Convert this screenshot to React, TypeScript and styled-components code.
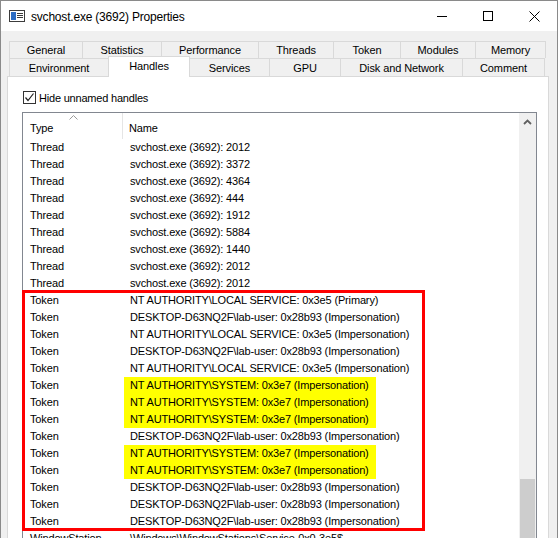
import React from "react";
import styled, { createGlobalStyle } from "styled-components";

const Global = createGlobalStyle`
  html, body { margin: 0; padding: 0; background: #ffffff; }
  body { font-family: "Liberation Sans", Arial, sans-serif; }
  * { box-sizing: border-box; }
`;

const Window = styled.div`
  width: 558px;
  height: 538px;
  overflow: hidden;
  border: 1px solid #8a8a8a;
  border-bottom: none;
  background: #f0f0f0;
  display: flex;
  flex-direction: column;
`;

const TitleBar = styled.div`
  height: 30px;
  flex: none;
  background: #ffffff;
  display: flex;
  align-items: center;
`;

const AppIcon = styled.svg`
  margin-left: 8px;
  margin-right: 6px;
  flex: none;
`;

const Title = styled.div`
  font-family: "Liberation Sans", Arial, sans-serif;
  font-size: 12px;
  letter-spacing: -0.2px;
  color: #000;
  flex: 1;
  padding-top: 1px;
`;

const CaptionButton = styled.div`
  width: 46px;
  height: 30px;
  display: flex;
  align-items: center;
  justify-content: center;
  flex: none;
`;

const Body = styled.div`
  flex: 1;
  padding: 10px 8px 0 6px;
  display: flex;
  flex-direction: column;
  min-height: 0;
`;

const TabStrip = styled.div`
  margin-left: 2px;
  width: 537px;
  display: flex;
  flex-direction: column;
  position: relative;
  z-index: 1;
`;

const TabRow = styled.div<{ $h: number }>`
  display: flex;
  height: ${(p) => p.$h}px;
  align-items: flex-end;
`;

const Tab = styled.div<{ $w: number; $last?: boolean; $active?: boolean }>`
  width: ${(p) => p.$w}px;
  flex: none;
  height: ${(p) => (p.$active ? "calc(100% + 3px)" : "100%")};
  margin-bottom: ${(p) => (p.$active ? "-1px" : "0")};
  border-top: 1px solid #d9d9d9;
  border-left: 1px solid #d9d9d9;
  border-right: ${(p) => (p.$last || p.$active ? "1px solid #d9d9d9" : "none")};
  margin-right: ${(p) => (p.$active ? "-1px" : "0")};
  background: ${(p) => (p.$active ? "#ffffff" : "#f0f0f0")};
  font-size: 11px;
  letter-spacing: -0.1px;
  color: #000;
  display: flex;
  align-items: center;
  justify-content: center;
  padding-bottom: ${(p) => (p.$active ? "3px" : "0")};
  position: relative;
  z-index: ${(p) => (p.$active ? 2 : 1)};
`;

const TabPage = styled.div`
  flex: 1;
  width: 542px;
  background: #ffffff;
  border: 1px solid #d9d9d9;
  border-bottom: none;
  padding: 14px 11px 0 14px;
  display: flex;
  flex-direction: column;
  min-height: 0;
`;

const CheckRow = styled.label`
  display: flex;
  align-items: center;
  gap: 3px;
  padding-left: 1px;
  height: 13px;
  font-size: 11px;
  letter-spacing: -0.2px;
  color: #000;
  line-height: 12px;
`;

const CheckBox = styled.span`
  width: 13px;
  height: 13px;
  border: 1px solid #333333;
  background: #ffffff;
  display: flex;
  align-items: center;
  justify-content: center;
  flex: none;
`;

const ListView = styled.div`
  margin-top: 8px;
  width: 515px;
  flex: 1;
  border: 1px solid #828790;
  border-bottom: none;
  display: flex;
  position: relative;
  min-height: 0;
`;

const ListMain = styled.div`
  flex: 1;
  display: flex;
  flex-direction: column;
  overflow: hidden;
`;

const Header = styled.div`
  height: 26px;
  flex: none;
  display: flex;
  position: relative;
  font-size: 11px;
  letter-spacing: -0.15px;
  color: #000;
`;

const HeaderCell = styled.div<{ $w?: number; $pad: number }>`
  width: ${(p) => (p.$w ? `${p.$w}px` : "auto")};
  flex: ${(p) => (p.$w ? "none" : "1")};
  padding-left: ${(p) => p.$pad}px;
  padding-top: 4px;
  display: flex;
  align-items: center;
  border-right: ${(p) => (p.$w ? "1px solid #e5e5e5" : "none")};
  position: relative;
`;

const SortArrow = styled.svg`
  position: absolute;
  left: 46px;
  top: 2px;
`;

const Row = styled.div`
  height: 17px;
  flex: none;
  display: flex;
  font-size: 11px;
  letter-spacing: -0.15px;
  color: #000;
  line-height: 17px;
  white-space: nowrap;
`;

const TypeCell = styled.div`
  width: 101px;
  flex: none;
  padding-left: 7px;
`;

const NameCell = styled.div`
  flex: 1;
`;

const NameText = styled.span<{ $hl?: boolean }>`
  display: inline-block;
  height: 17px;
  padding: 0 7px 0 6px;
  background: ${(p) => (p.$hl ? "#ffff00" : "transparent")};
`;

const ScrollBar = styled.div`
  width: 17px;
  flex: none;
  background: #f0f0f0;
  display: flex;
  flex-direction: column;
  align-items: center;
`;

const ScrollButton = styled.div`
  height: 17px;
  width: 17px;
  display: flex;
  align-items: center;
  justify-content: center;
  flex: none;
`;

const ScrollTrack = styled.div`
  flex: 1;
  width: 15px;
  padding-top: 349px;
`;

const Thumb = styled.div`
  height: 100px;
  background: #cdcdcd;
`;

const Annotation = styled.div`
  position: absolute;
  left: -1px;
  top: 177px;
  width: 403px;
  height: 241px;
  border: 3px solid #ff0000;
  pointer-events: none;
`;

type Item = { type: string; name: string; hl?: boolean };

const SYS = "NT AUTHORITY\\SYSTEM: 0x3e7 (Impersonation)";
const LAB = "DESKTOP-D63NQ2F\\lab-user: 0x28b93 (Impersonation)";
const LS = "NT AUTHORITY\\LOCAL SERVICE: 0x3e5 (Impersonation)";

const items: Item[] = [
  ...["2012", "3372", "4364", "444", "1912", "5884", "1440", "2012", "2012"].map((n) => ({
    type: "Thread",
    name: `svchost.exe (3692): ${n}`,
  })),
  { type: "Token", name: "NT AUTHORITY\\LOCAL SERVICE: 0x3e5 (Primary)" },
  { type: "Token", name: LAB },
  { type: "Token", name: LS },
  { type: "Token", name: LAB },
  { type: "Token", name: LS },
  { type: "Token", name: SYS, hl: true },
  { type: "Token", name: SYS, hl: true },
  { type: "Token", name: SYS, hl: true },
  { type: "Token", name: LAB },
  { type: "Token", name: SYS, hl: true },
  { type: "Token", name: SYS, hl: true },
  { type: "Token", name: LAB },
  { type: "Token", name: LAB },
  { type: "Token", name: LAB },
  { type: "WindowStation", name: "\\Windows\\WindowStations\\Service-0x0-3e5$" },
];

const row1: [string, number][] = [
  ["General", 73],
  ["Statistics", 79],
  ["Performance", 97],
  ["Threads", 75],
  ["Token", 67],
  ["Modules", 75],
  ["Memory", 71],
];

const row2: [string, number][] = [
  ["Environment", 99],
  ["Handles", 82],
  ["Services", 80],
  ["GPU", 71],
  ["Disk and Network", 122],
  ["Comment", 83],
];

export default function App() {
  return (
    <>
      <Global />
      <Window>
        <TitleBar>
          <AppIcon width="16" height="12" viewBox="0 0 16 12">
            <rect x="0.5" y="0.5" width="15" height="11" fill="#ffffff" stroke="#3c3c3c" />
            <rect x="2" y="2" width="5" height="8" fill="#2b6cc4" />
            <rect x="8" y="3" width="6" height="1" fill="#3c3c3c" />
            <rect x="8" y="5" width="6" height="1" fill="#3c3c3c" />
            <rect x="8" y="7" width="6" height="1" fill="#3c3c3c" />
          </AppIcon>
          <Title>svchost.exe (3692) Properties</Title>
          <CaptionButton>
            <svg width="10" height="10" viewBox="0 0 10 10">
              <rect x="0" y="5" width="10" height="1" fill="#000" />
            </svg>
          </CaptionButton>
          <CaptionButton>
            <svg width="10" height="10" viewBox="0 0 10 10">
              <rect x="0.5" y="0.5" width="9" height="9" fill="none" stroke="#000" />
            </svg>
          </CaptionButton>
          <CaptionButton>
            <svg width="11" height="11" viewBox="0 0 11 11">
              <path d="M0.5 0.5 L10.5 10.5 M10.5 0.5 L0.5 10.5" stroke="#000" strokeWidth="1" />
            </svg>
          </CaptionButton>
        </TitleBar>
        <Body>
          <TabStrip>
            <TabRow $h={17}>
              {row1.map(([t, w], i) => (
                <Tab key={t} $w={w} $last={i === row1.length - 1}>
                  {t}
                </Tab>
              ))}
            </TabRow>
            <TabRow $h={18}>
              {row2.map(([t, w], i) => (
                <Tab key={t} $w={w} $last={i === row2.length - 1} $active={t === "Handles"}>
                  {t}
                </Tab>
              ))}
            </TabRow>
          </TabStrip>
          <TabPage>
            <CheckRow>
              <CheckBox>
                <svg width="11" height="11" viewBox="0 0 11 11">
                  <path d="M1.5 5.5 L4 8.5 L9.5 1.5" stroke="#222" strokeWidth="1.2" fill="none" />
                </svg>
              </CheckBox>
              Hide unnamed handles
            </CheckRow>
            <ListView>
              <ListMain>
                <Header>
                  <HeaderCell $w={100} $pad={7}>
                    <SortArrow width="9" height="5" viewBox="0 0 9 5">
                      <path d="M0.5 4.5 L4.5 0.5 L8.5 4.5" stroke="#9a9a9a" strokeWidth="1" fill="none" />
                    </SortArrow>
                    Type
                  </HeaderCell>
                  <HeaderCell $pad={6}>Name</HeaderCell>
                </Header>
                {items.map((it, i) => (
                  <Row key={i}>
                    <TypeCell>{it.type}</TypeCell>
                    <NameCell>
                      <NameText $hl={it.hl}>{it.name}</NameText>
                    </NameCell>
                  </Row>
                ))}
              </ListMain>
              <ScrollBar>
                <ScrollButton>
                  <svg width="9" height="6" viewBox="0 0 9 6">
                    <path d="M1 5 L4.5 1.5 L8 5" stroke="#606060" strokeWidth="1.8" fill="none" />
                  </svg>
                </ScrollButton>
                <ScrollTrack>
                  <Thumb />
                </ScrollTrack>
              </ScrollBar>
              <Annotation />
            </ListView>
          </TabPage>
        </Body>
      </Window>
    </>
  );
}
